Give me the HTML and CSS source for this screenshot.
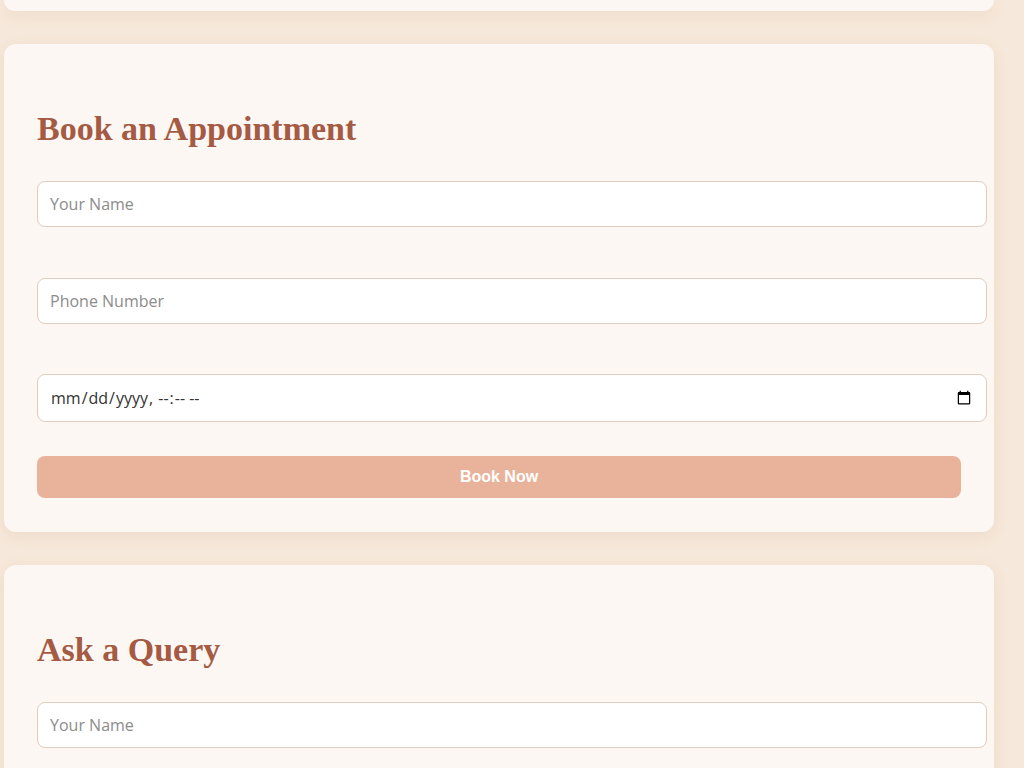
FILE: index.html
```html
<!DOCTYPE html>
<html lang="en">
<head>
<meta charset="utf-8">
<title>Book an Appointment</title>
<link rel="stylesheet" href="styles.css">
</head>
<body>
<main class="page">
  <div class="card card-prev"></div>

  <section class="card">
    <h2 class="card-title">Book an Appointment</h2>
    <form class="form">
      <input class="field" type="text" placeholder="Your Name">
      <input class="field field-last" type="tel" placeholder="Phone Number">
      <input class="field field-date" type="datetime-local">
      <button class="btn" type="button">Book Now</button>
    </form>
  </section>

  <section class="card">
    <h2 class="card-title">Ask a Query</h2>
    <form class="form">
      <input class="field" type="text" placeholder="Your Name">
    </form>
  </section>
</main>
</body>
</html>
```

FILE: styles.css
```css
html, body {
  margin: 0;
  padding: 0;
}

body {
  background: #f6e8da;
  font-family: "Open Sans", "Lato", sans-serif;
  height: 768px;
  overflow: hidden;
}

.page {
  display: flex;
  flex-direction: column;
  gap: 33px;
  padding-left: 4px;
  width: 990px;
}

.card {
  background: #fdf7f3;
  border-radius: 12px;
  padding: 33px 33px 34px;
  box-shadow: 0 4px 16px rgba(160, 110, 70, 0.10);
}

.card-prev {
  height: 11px;
  padding: 0;
  border-radius: 0 0 12px 12px;
}

.card-title {
  font-family: "Liberation Serif", "Times New Roman", serif;
  font-weight: bold;
  font-size: 34px;
  line-height: 40px;
  color: #a55a44;
  margin: 32px 0 32px;
}

.form {
  display: flex;
  flex-direction: column;
  align-items: flex-start;
}

.field {
  width: 100%;
  box-sizing: content-box;
  padding: 0 12px;
  height: 44px;
  border: 1px solid #e2cdbd;
  border-radius: 8px;
  background: #ffffff;
  font-family: "Open Sans", "Lato", sans-serif;
  font-size: 16px;
  color: #333333;
  margin: 0 0 51px;
  outline: none;
}

.field::placeholder {
  color: #8c8c8c;
}

.field-last {
  margin-bottom: 50px;
}

.field-date {
  height: 46px;
  font-size: 16px;
  margin-bottom: 34px;
  color: #333333;
}

.btn {
  width: 100%;
  height: 42px;
  border: none;
  border-radius: 8px;
  background: #e8b39a;
  color: #ffffff;
  font-family: "Liberation Sans", Arial, sans-serif;
  font-weight: bold;
  font-size: 16px;
  cursor: pointer;
}
```
